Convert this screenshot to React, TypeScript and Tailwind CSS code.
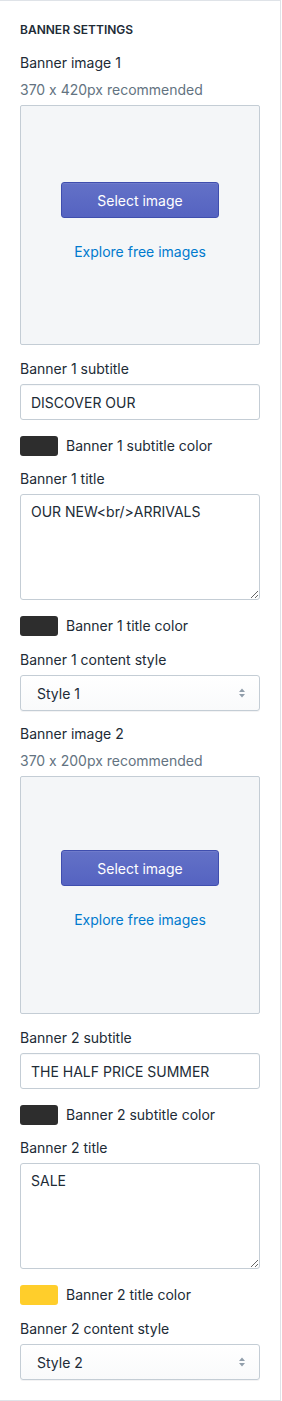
import { ReactNode } from "react";

const font = { fontFamily: "Inter, 'Noto Sans', sans-serif" };

function Label({ children }: { children: ReactNode }) {
  return <div className="text-[14px] leading-5 text-[#212b36]">{children}</div>;
}

function ImagePicker({ label, help, first }: { label: string; help: string; first?: boolean }) {
  return (
    <div className={first ? "mt-[14px]" : "mt-[13px]"}>
      <Label>{label}</Label>
      <div className="mt-[7px] text-[14px] leading-5 text-[#637381]">{help}</div>
      <div
        className={`mt-[5px] flex flex-col items-center rounded-[2px] border border-[#c4cdd5] bg-[#f4f6f8] ${
          first ? "h-[240px] pt-[76px]" : "h-[238px] pt-[73px]"
        }`}
      >
        <button className="h-9 w-[158px] rounded-[3px] border border-[#3f4eae] bg-gradient-to-b from-[#6371c7] to-[#5563c1] text-[14px] text-white shadow-[inset_0_1px_0_0_#6f7bcb]">
          Select image
        </button>
        <a className="mt-[24px] text-[14px] leading-5 text-[#007ace]">Explore free images</a>
      </div>
    </div>
  );
}

function TextField({ label, value }: { label: string; value: string }) {
  return (
    <div className="mt-[14px]">
      <Label>{label}</Label>
      <div className="mt-[5px] flex h-9 items-center rounded-[3px] border border-[#c4cdd5] bg-white px-[10px] text-[14px] text-[#212b36] shadow-[inset_0_1px_0_0_rgba(99,115,129,0.05)]">
        {value}
      </div>
    </div>
  );
}

function TextArea({ label, value }: { label: string; value: string }) {
  return (
    <div className="mt-[13px]">
      <Label>{label}</Label>
      <textarea
        readOnly
        defaultValue={value}
        className="mt-[5px] block h-[106px] w-full rounded-[3px] border border-[#c4cdd5] bg-white px-[10px] py-[7px] text-[14px] leading-5 text-[#212b36] outline-none [font-feature-settings:'calt'_0]"
        style={font}
      />
    </div>
  );
}

function ColorRow({ label, color }: { label: string; color: string }) {
  return (
    <div className="mt-4 flex items-center">
      <div className={`h-5 w-[38px] rounded-[3px] ${color}`} />
      <span className="ml-2 text-[14px] leading-5 text-[#212b36]">{label}</span>
    </div>
  );
}

function SelectField({ label, value }: { label: string; value: string }) {
  return (
    <div className="mt-[14px]">
      <Label>{label}</Label>
      <div className="mt-[5px] flex h-9 items-center justify-between rounded-[3px] border border-[#c4cdd5] bg-gradient-to-b from-white to-[#f9fafb] pl-4 pr-[13px] text-[14px] text-[#212b36] shadow-[0_1px_0_0_rgba(22,29,37,0.05)]">
        <span>{value}</span>
        <svg width="8" height="12" viewBox="0 0 8 12" fill="#919eab">
          <path d="M4 1.5 7 5H1z" />
          <path d="M4 10.5 1 7h6z" />
        </svg>
      </div>
    </div>
  );
}

export default function App() {
  return (
    <div className="bg-white [font-feature-settings:'calt'_0]" style={font}>
      <div className="w-[281px] border-y border-r border-[#dfe3e8] bg-white px-5 pb-5 pt-[21px]">
        <h3 className="text-[12px] font-semibold uppercase leading-4 text-[#212b36]">Banner settings</h3>
        <div className="h-px" />

        <ImagePicker label="Banner image 1" help="370 x 420px recommended" first />
        <TextField label="Banner 1 subtitle" value="DISCOVER OUR" />
        <ColorRow label="Banner 1 subtitle color" color="bg-[#2d2d2d]" />
        <TextArea label="Banner 1 title" value="OUR NEW<br/>ARRIVALS" />
        <ColorRow label="Banner 1 title color" color="bg-[#2d2d2d]" />
        <SelectField label="Banner 1 content style" value="Style 1" />

        <ImagePicker label="Banner image 2" help="370 x 200px recommended" />
        <TextField label="Banner 2 subtitle" value="THE HALF PRICE SUMMER" />
        <ColorRow label="Banner 2 subtitle color" color="bg-[#2d2d2d]" />
        <TextArea label="Banner 2 title" value="SALE" />
        <ColorRow label="Banner 2 title color" color="bg-[#ffce2b]" />
        <SelectField label="Banner 2 content style" value="Style 2" />
      </div>
    </div>
  );
}
